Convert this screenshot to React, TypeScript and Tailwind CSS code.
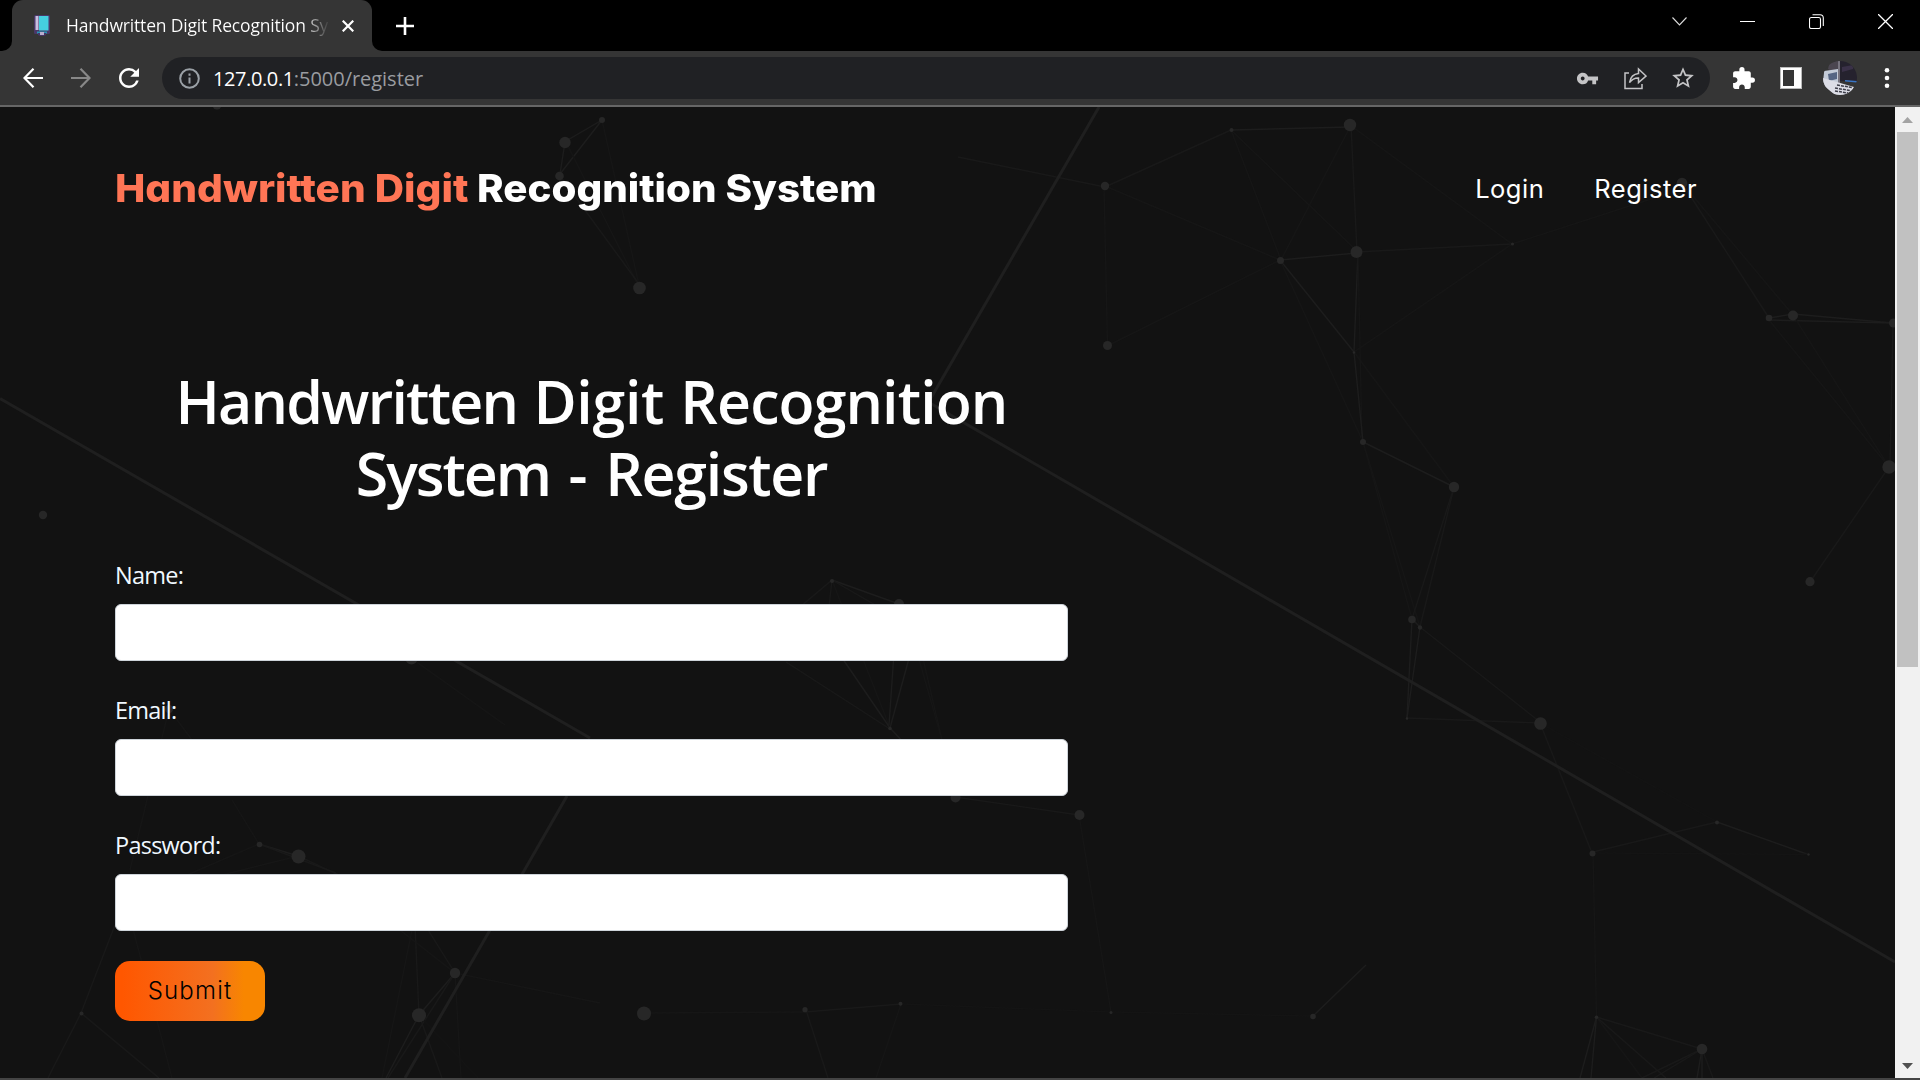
import React from "react";
import { MdVpnKey, MdExtension, MdStarBorder, MdRefresh } from "react-icons/md";

type Seg = [number, number, number, number, number?];
type Dot = [number, number, number];

const dots: Dot[] = [
  [602, 120, 3], [565, 142.5, 5.7], [559.5, 176, 4.3], [639.5, 288, 6.3],
  [1105, 186, 4.2], [1231.5, 130, 2], [1350, 125, 6.2], [1280.5, 260.5, 3.5], [1356.5, 252, 6],
  [1512.5, 244, 1.6], [1107.5, 345.5, 4.5], [1354, 352.5, 1.3], [1363, 442, 3], [1454, 487, 5.2],
  [1682, 183, 5.3], [1769, 318, 3.3], [1793, 315.5, 5], [1893.5, 323, 4.5], [1889, 467, 6.7],
  [1412, 619.5, 3.8], [1420, 627.5, 2.2], [1407, 718.5, 1.2], [1540.5, 723.5, 6.3], [1592.5, 853.5, 3],
  [1717, 822.5, 2], [1808.5, 854.5, 1.2], [1810, 581.7, 4.6], [1313, 1016.5, 2.8], [1596.5, 1017.2, 1.8],
  [1702, 1049, 5.3], [832, 581, 2], [899, 604, 5], [890, 728.5, 1.8], [955.5, 797.5, 5], [1079.5, 815, 5],
  [805, 1009.7, 2.6], [900.5, 1003.7, 2], [1111, 1012.5, 1.5], [644, 1013.5, 7], [259.5, 844.5, 2.8],
  [298.5, 856.5, 7], [455, 973, 5.2], [419, 1015.3, 7], [411.5, 658.5, 6], [169, 709, 4], [43, 515, 4.2],
  [217, 105, 4.5], [81.5, 1013.5, 2],
];

const links: Seg[] = [
  [602, 120, 566, 141, 2], [602, 120, 560, 174, 2], [565, 142, 560, 174, 2], [602, 120, 639, 285, 0], [566, 142, 638, 285, 0], [560, 176, 639, 284, 1],
  [958, 157, 1105, 187, 1], [1105, 187, 1231, 130, 1], [1231, 130, 1350, 127, 2], [1231, 130, 1281, 260, 0], [1231, 130, 1356, 250, 0],
  [1350, 127, 1281, 260, 0], [1351, 125, 1357, 252, 1], [1350, 125, 1512, 244, 0], [1105, 186, 1280, 260, 0], [1104, 186, 1107.5, 345, 0],
  [1280, 260, 1107, 346, 0], [1280, 260, 1357, 253, 2], [1356, 252, 1512, 244, 1], [1280, 260, 1354, 352, 2], [1358, 252, 1354, 352, 2],
  [1512, 244, 1354, 352, 0], [1280, 260, 1363, 442, 0], [1358, 252, 1362, 442, 0], [1354, 352, 1363, 442, 2], [1363, 442, 1454, 487, 2], [1354, 352, 1454, 487, 0],
  [1512, 244, 1682, 189, 0], [1682, 183, 1769, 318, 1], [1682, 183, 1793, 315, 0], [1769, 318, 1793, 314, 2], [1793, 314, 1893, 323, 2],
  [1769, 320, 1893, 323, 2], [1769, 320, 1889, 467, 0], [1793, 315, 1889, 467, 0], [1893, 323, 1890, 467, 1], [1889, 467, 1810, 582, 1],
  [1363, 442, 1412, 619, 0], [1363, 442, 1420, 627, 0], [1454, 487, 1412, 619, 1], [1454, 487, 1420, 627, 1], [1412, 619, 1420, 627, 2],
  [1412, 619, 1407, 718, 2], [1420, 627, 1407, 718, 2], [1420, 627, 1540, 722, 1], [1407, 718, 1540, 723, 1], [1540, 723, 1592, 853, 1],
  [1540, 723, 1717, 822, -1], [1593, 852, 1717, 822, 1], [1717, 822, 1808, 854.5, 2], [1593, 853, 1808, 854.5, -1], [1593, 853, 1596.5, 1017, 0],
  [1596.5, 1017, 1702, 1049, 1], [1596.5, 1017, 1580, 1078, 2], [1596.5, 1017, 1591, 1078, 2], [1596.5, 1017, 1642, 1078, 0], [1596.5, 1017, 1666, 1078, 1],
  [1702, 1049, 1642, 1078, 1], [1702, 1049, 1654, 1078, 1], [1702, 1049, 1697, 1078, 2], [1702, 1049, 1702, 1078, 2], [1702, 1049, 1713, 1078, 1],
  [1313, 1016, 1366, 965, 2], [832, 580, 775, 628, 1], [832, 580, 823, 660, 1], [832, 580, 899, 604, 2], [832, 580, 915, 628, 1], [832, 580, 890, 728, 0],
  [786, 662, 890, 729, 1], [823, 630, 890, 728, 2], [897, 610, 889, 725, 2], [914, 640, 890, 728, 2], [890, 728, 955, 797, 2],
  [905, 610, 942, 740, 0], [914, 620, 942, 740, 0], [955, 797, 1079, 815, 1], [1079, 815, 1111, 1012, 0], [644, 1013, 805, 1012, 0],
  [805, 1012, 901, 1004, 1], [901, 1004, 1111, 1012, -1], [806, 1010, 828, 1078, 1], [901, 1004, 876, 1078, 0], [1111, 1012, 1310, 1016, -1],
  [259, 844, 298, 856, 2], [259, 844, 180, 878, 0], [298, 856, 210, 878, 0], [298, 856, 345, 878, 1], [259, 844, 232, 800, 0], [259, 844, 336, 873, 1],
  [415, 925, 419, 1015, 1], [425, 925, 455, 973, 1], [455, 973, 419, 1015, 2], [400, 930, 455, 973, 0], [412, 930, 382, 1078, 0],
  [419, 1015, 386, 1078, 2], [455, 973, 388, 1078, 1], [419, 1015, 442, 1078, 1], [455, 973, 461, 1078, 0], [455, 973, 600, 1003, 0], [419, 1015, 478, 1078, -1],
  [411, 658, 505, 725, 0], [169, 709, 130, 870, 0], [169, 709, 192, 740, 0], [115, 925, 81, 1013, 1], [81, 1013, 159, 1078, 1], [81, 1013, 48, 1078, 1],
  [132, 925, 172, 1078, 0],
];

const tones: Record<string, string> = { "-1": "#141414", "0": "#161616", "1": "#191919", "2": "#1d1d1d" };

function Backdrop() {
  return (
    <svg className="absolute inset-0 h-full w-full" viewBox="0 107 1895 971" preserveAspectRatio="none">
      <g strokeWidth="1.4">
        {links.map(([x1, y1, x2, y2, t], i) => (
          <line key={i} x1={x1} y1={y1} x2={x2} y2={y2} stroke={tones[String(t ?? 0)]} />
        ))}
      </g>
      <g stroke="#1f1f1f" strokeWidth="3">
        <path d="M0 398.5 590 738M929 402.500 1895 962M1099 107 931 398M567 796 405 1078" fill="none" />
      </g>
      <g fill="#272727">
        {dots.map(([x, y, r], i) => (
          <circle key={i} cx={x} cy={y} r={r} />
        ))}
      </g>
    </svg>
  );
}

function TabStrip() {
  return (
    <div className="flex h-[51px] shrink-0 bg-black">
      <div className="flex w-3 items-end bg-[#353535]">
        <div className="h-full w-full rounded-br-[10px] bg-black" />
      </div>
      <div className="bg-black">
        <div className="flex h-[51px] w-[360px] items-center rounded-t-[11px] bg-[#353535]">
          <svg className="ml-[21px] h-6 w-[18px] shrink-0" viewBox="0 0 18 24">
            <rect x="1" y="1" width="16" height="19" rx="1.500" fill="#4a3868" />
            <rect x="2.500" y="2" width="3" height="14" fill="#c9bfe0" />
            <rect x="6" y="2" width="9.500" height="14.500" fill="#45cfe0" />
            <path d="M4 17.500h10v2H4z" fill="#2695b5" />
            <path d="M5 19h8v2l-2 1H7l-2-1z" fill="#473565" />
            <path d="M7 18h4v3H7z" fill="#b9afcf" />
          </svg>
          <div className="mb-px ml-[15px] w-[264px] overflow-hidden whitespace-nowrap bg-gradient-to-r from-white from-[90%] to-[#353535] to-100% bg-clip-text font-['Open_Sans'] text-[17.500px] leading-[26px] tracking-[-0.17px] text-transparent">
            Handwritten Digit Recognition Sy
          </div>
          <svg className="ml-[12px] h-3 w-3 shrink-0" viewBox="0 0 12 12" stroke="#fff" strokeWidth="2.200">
            <path d="M.7.7l10.600 10.600M11.300.7L.7 11.300" />
          </svg>
        </div>
      </div>
      <div className="w-3 bg-[#353535]">
        <div className="h-full w-full rounded-bl-[10px] bg-black" />
      </div>
      <svg className="mt-[17px] ml-3 h-[18px] w-[18px]" viewBox="0 0 18 18" stroke="#fff" strokeWidth="2.600">
        <path d="M9 0v18M0 9h18" />
      </svg>
      <div className="mr-[27px] ml-auto flex items-start pt-3.5">
        <svg className="mt-[3px] mr-[53px] h-[9px] w-[15px]" viewBox="0 0 15 9" fill="none" stroke="#ddd" strokeWidth="1.100">
          <path d="M.5.5l7 7.500 7-7.500" />
        </svg>
        <div className="mt-[7px] mr-[54px] h-px w-[15px] bg-white" />
        <svg className="mr-[54px] h-[15px] w-[15px]" viewBox="0 0 15 15" fill="none" stroke="#fff" strokeWidth="1.100">
          <rect x=".5" y="3.500" width="11" height="11" rx="1.800" />
          <path d="M3.500.7H11a3.300 3.300 0 0 1 3.300 3.300v8" />
        </svg>
        <svg className="h-[15px] w-[15px]" viewBox="0 0 15 15" stroke="#fff" strokeWidth="1.300">
          <path d="M0 0l15 15M15 0L0 15" />
        </svg>
      </div>
    </div>
  );
}

function Toolbar() {
  return (
    <div className="flex h-[56px] shrink-0 items-start border-b-2 border-[#666] bg-[#353535] pt-1.5">
      <div className="flex h-[42px] w-[162px] shrink-0 items-center">
        <svg className="ml-[23px] h-5 w-5" viewBox="0 0 20 20" fill="none" stroke="#fff" strokeWidth="2.200">
          <path d="M20 10H1.500M10.500.8L1.500 10l9 9.200" />
        </svg>
        <svg className="ml-7 h-5 w-5" viewBox="0 0 20 20" fill="none" stroke="#888" strokeWidth="2.200">
          <path d="M0 10h18.500M9.500.8l9 9.200-9 9.200" />
        </svg>
        <MdRefresh className="ml-[23px] h-[30px] w-[30px] text-white" />
      </div>
      <div className="flex h-[42px] w-[1548px] items-center rounded-full bg-[#202124]">
        <svg className="ml-[17px] h-[21px] w-[21px]" viewBox="0 0 21 21" fill="none" stroke="#9aa0a6" strokeWidth="2">
          <circle cx="10.500" cy="10.500" r="9.300" />
          <path d="M10.500 9.500v6M10.500 5.500v2.200" />
        </svg>
        <div className="mt-0.5 ml-[13px] whitespace-nowrap font-['Open_Sans'] text-[20px] leading-7 text-[#9a9ca0]">
          <span className="tracking-[-0.4px] text-white">127.0.0.1</span>
          <span className="tracking-[-0.03px]">:5000/register</span>
        </div>
        <div className="mr-[14px] ml-auto flex items-center text-[#c4c4c6]">
          <MdVpnKey className="h-[23px] w-[23px]" />
          <svg className="ml-[25px] h-[23px] w-[23px]" viewBox="0 0 23 23" fill="none" stroke="#c4c4c6" strokeWidth="1.500">
            <path d="M5 6H1v15.500h17V17" />
            <path d="M5.500 15.500C6.500 9.500 9.500 7 14.500 6.500V2L22 9l-7.500 6.500V11c-4-.2-6.500 1.300-9 4.500z" />
          </svg>
          <MdStarBorder className="ml-[23px] h-[26px] w-[26px]" />
        </div>
      </div>
      <div className="flex h-[42px] items-center text-white">
        <MdExtension className="ml-[21px] h-[25px] w-[25px]" />
        <div className="ml-[24px] flex h-[22px] w-[22px] justify-start border border-[#bbb] bg-white">
          <div className="mt-[2px] ml-[2px] h-4 w-[11px] bg-[#353535]" />
        </div>
        <svg className="ml-[21px] h-[34px] w-[34px]" viewBox="0 0 34 34">
          <clipPath id="avatar"><circle cx="17" cy="17" r="17" /></clipPath>
          <g clipPath="url(#avatar)">
            <path d="M0 0h34v34H0z" fill="#353535" />
            <path d="M7 0h9v14L5 8z" fill="#4b4650" />
            <path d="M1 10l14-2v16L0 22z" fill="#c3cbd8" />
            <path d="M5 13l9-2v7l-8 2z" fill="#566684" />
            <path d="M15 0h2v22h-2z" fill="#77747f" />
            <path d="M17 0h17v21l-17-1z" fill="#25222e" />
            <path d="M19 6l11-2v4l-11 3z" fill="#3a3148" />
            <path d="M22 19l12 1v1.500l-12-1z" fill="#3975c4" />
            <path d="M0 17l31 9-4 8H12L0 24z" fill="#dcdde6" />
            <path d="M14 24l15 2.500M12 27l15 2.500M12 30l13 2" stroke="#3d3e49" strokeWidth="1.500" strokeDasharray="3 1" />
          </g>
        </svg>
        <svg className="ml-[20px] h-5 w-5" viewBox="0 0 20 20" fill="#fff">
          <circle cx="10" cy="2.300" r="2.300" />
          <circle cx="10" cy="10" r="2.300" />
          <circle cx="10" cy="17.700" r="2.300" />
        </svg>
      </div>
    </div>
  );
}

function Field({ label, type }: { label: string; type: string }) {
  return (
    <label className="mb-[31px] flex flex-col">
      <span className="mb-[11px] h-9 font-['Open_Sans'] text-[23.500px] leading-9 tracking-[-0.75px] text-[aliceblue]">{label}</span>
      <input type={type} className="h-[57px] w-full rounded-md border border-[#ced4da] bg-white px-4" />
    </label>
  );
}

function Page() {
  return (
    <main className="relative flex-1 overflow-hidden bg-[#121212]">
      <Backdrop />
      <div className="relative flex flex-col pl-[115px]">
        <header className="mt-[51px] flex h-[60px] items-center font-['Inter'] text-white [font-feature-settings:'cv11']">
          <h1 className="flex whitespace-nowrap text-[38.500px] font-extrabold leading-[60px]">
            <span className="w-[362px] origin-left scale-x-[1.054] text-[#ff7555]">Handwritten Digit</span>
            <span className="origin-left scale-x-[1.047]">Recognition System</span>
          </h1>
          <nav className="mt-0.5 mr-[198px] ml-auto flex gap-[50px] text-[25.500px] leading-[38px] tracking-[0.5px]">
            <a>Login</a>
            <a>Register</a>
          </nav>
        </header>
        <form className="mt-[147px] flex w-[953px] flex-col">
          <h2 className="mb-[48px] whitespace-nowrap text-center font-['Open_Sans'] text-[59px] font-semibold leading-[72px] tracking-[-0.98px] text-white">
            <span className="block [word-spacing:1.800px]">
              <span className="tracking-[-1.750px]">Handwritten</span> <span className="tracking-[-0.3px]">Digit</span>{" "}
              <span className="tracking-[-0.88px]">Recognition</span>
            </span>
            <span className="block [word-spacing:4.200px]">
              <span className="tracking-[-2px]">System</span> - <span className="tracking-[-1.280px]">Register</span>
            </span>
          </h2>
          <Field label="Name:" type="text" />
          <Field label="Email:" type="text" />
          <Field label="Password:" type="password" />
          <button
            type="button"
            className="-mt-px h-[60px] w-[150px] rounded-[15px] bg-[linear-gradient(90deg,#ff5700_5%,#f37020_65%,#f88600_86%)] font-['Inter'] text-[24px] font-light tracking-[1.2px] text-black"
          >
            Submit
          </button>
        </form>
      </div>
    </main>
  );
}

function Scrollbar() {
  return (
    <div className="flex w-[25px] shrink-0 flex-col items-center bg-[#f1f1f1]">
      <svg className="mt-[10px] h-[6px] w-[11px]" viewBox="0 0 11 6"><path d="M0 6L5.500 0 11 6z" fill="#a3a3a3" /></svg>
      <div className="mt-[9px] h-[535px] w-[21px] bg-[#c1c1c1]" />
      <svg className="mt-auto mb-[9px] h-[6px] w-[11px]" viewBox="0 0 11 6"><path d="M0 0h11L5.500 6z" fill="#505050" /></svg>
    </div>
  );
}

export default function App() {
  return (
    <div className="flex h-[1080px] w-[1920px] flex-col overflow-hidden bg-[#444]">
      <TabStrip />
      <Toolbar />
      <div className="flex h-[971px]">
        <Page />
        <Scrollbar />
      </div>
    </div>
  );
}
